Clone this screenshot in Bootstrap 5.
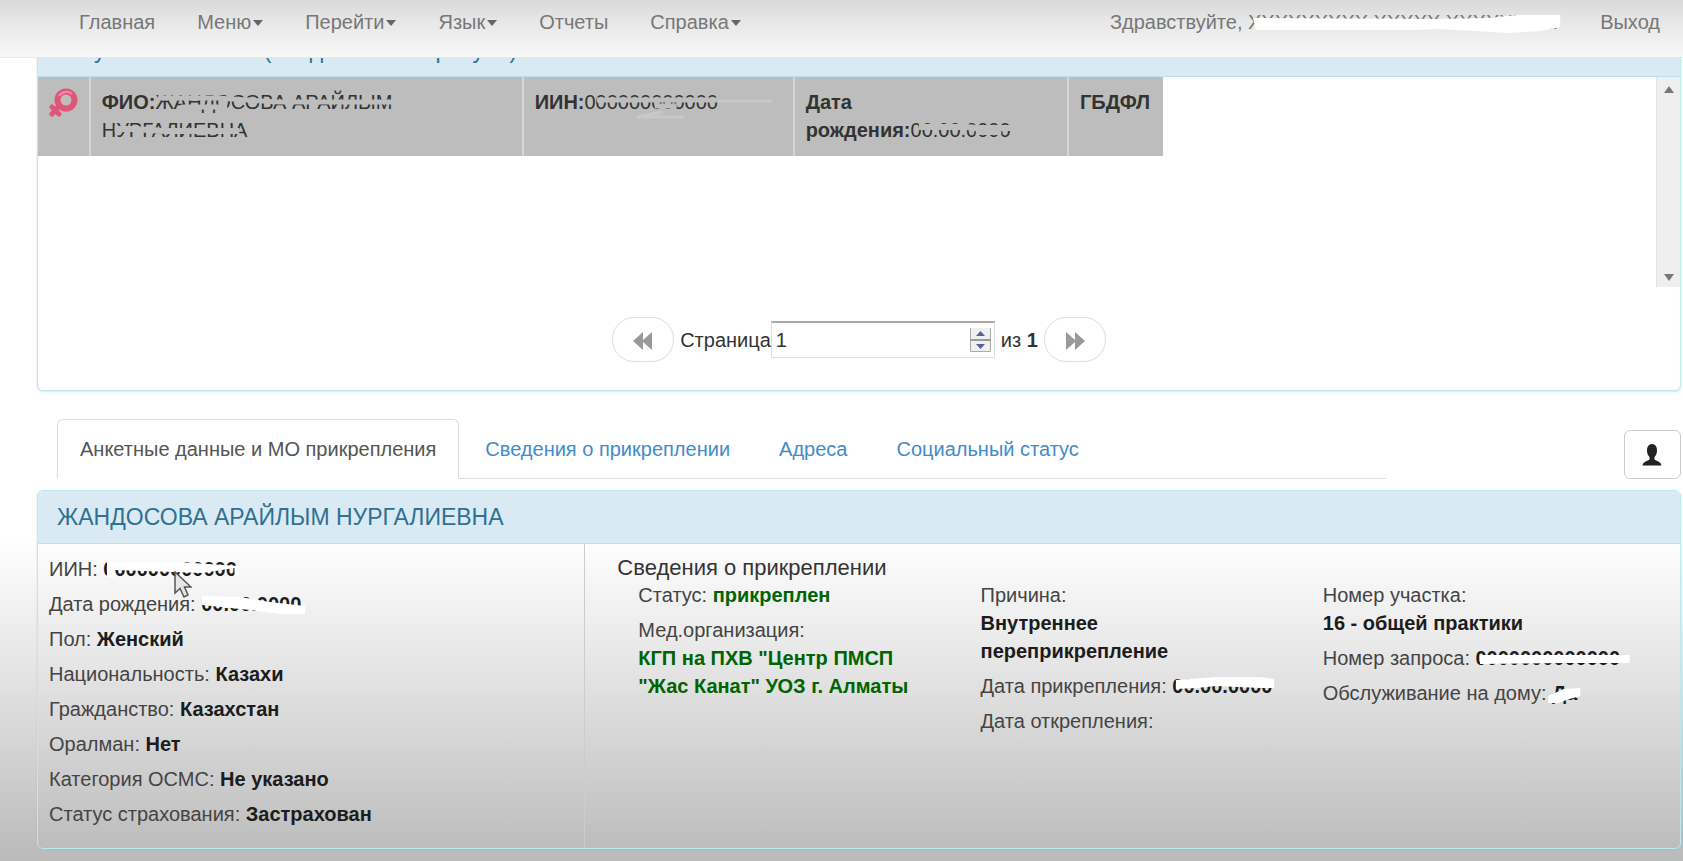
<!DOCTYPE html>
<html lang="ru">
<head>
<meta charset="utf-8">
<meta name="viewport" content="width=device-width, initial-scale=1">
<title>Регистр прикрепленного населения</title>
<link href="https://cdn.jsdelivr.net/npm/bootstrap@5.3.0/dist/css/bootstrap.min.css" rel="stylesheet">
<style>
  body { font: 20px/28px "Liberation Sans", Arial, sans-serif; color: #333; min-height: 100vh;
    background: linear-gradient(#fff 0, #fff 62%, #ebebeb 74%, #d5d5d5 86%, #bababa 100%) no-repeat; }
  .topbar { height: 58px; background: linear-gradient(#d9d9d9, #e6e6e6 35%, #f8f8f8); border-bottom: 1px solid #e7e7e7; padding: 8px 2px 0 58px; }
  .topbar .nav-link { color: #777; padding: 0 21px; white-space: nowrap; }
  .topbar .dropdown-toggle::after { margin-left: 2px; vertical-align: 3px; border-width: 6px 5px 0; border-style: solid; border-color: #666 transparent transparent; }
  .page { padding: 23px 2px 11px 37px; }
  .panel { border: 1px solid #bce8f1; border-radius: 6px; box-shadow: 0 1px 2px rgba(120,190,210,.35); }
  .panel-head { background: #d9eaf5; border-bottom: 1px solid #bce0ee; border-radius: 5px 5px 0 0; color: #31708f; padding: 13px 19px; }
  .panel-head h3 { font-size: 23px; line-height: 26px; margin: 0; font-weight: 400; }
  .results { min-height: 210px; }
  .people { width: 69.5%; table-layout: fixed; }
  .people td { background: #bdbdbd; padding: 11px; height: 79px; vertical-align: top; border-right: 2px solid #d6d6d6; }
  .people td:last-child { border-right: 0; }
  .scroll-rail { width: 24px; background: #efefef; border-left: 1px solid #e2e2e2; padding: 9px 0 6px; }
  .pager-row { padding: 30px 0 28px; gap: 6px; }
  .pager-btn { width: 62px; height: 45px; border: 1px solid #ddd; border-radius: 22px; background: #fff; padding: 0; }
  .page-input { width: 224px; height: 37px; border: 1px solid #ddd; border-top: 2px solid #aaa; padding: 0 4px; color: #333; appearance: textfield; -moz-appearance: textfield; }
  .page-input::-webkit-inner-spin-button { appearance: none; -webkit-appearance: none; }
  .spinner-art { right: 4px; top: 7px; pointer-events: none; }
  .tabs-row { margin-top: 28px; margin-bottom: 11px; }
  .tabs-col { padding-left: 20px; padding-right: 21px; }
  .nav-tabs { border-bottom: 1px solid #ddd; }
  .nav-tabs .nav-link { color: #428bca; padding: 15px 22px; margin-right: 3px; border-radius: 6px 6px 0 0; white-space: nowrap; }
  .nav-tabs .nav-link.active { color: #555; background: #fff; border-color: #ddd #ddd #fff; }
  .user-btn { width: 57px; height: 49px; border: 1px solid #ccc; border-radius: 6px; background: #fff; }
  .left-col { border-right: 1px solid #ccc; padding: 11px 11px 13px; }
  .right-col { padding: 11px 36px 11px 32px; }
  .right-col h4 { font-size: 22px; line-height: 26px; margin: 0; font-weight: 400; color: #333; }
  .facts { margin: 0; padding: 0; list-style: none; }
  .facts li { padding-bottom: 7px; color: #444; }
  .facts strong { color: #1c1c1c; display: inline-block; }
  .facts .attached { color: #006400; }
  .fact-col { padding: 0 21px; }
  .strike-art { left: 0; top: 0; width: 100%; height: 28px; overflow: visible; pointer-events: none; }
  .pointer-art { left: 125px; top: 16px; }
</style>
</head>
<body>
<nav class="topbar fixed-top d-flex justify-content-between">
  <ul class="nav flex-nowrap">
    <li><a class="nav-link" href="#">Главная</a></li>
    <li><a class="nav-link dropdown-toggle" href="#">Меню</a></li>
    <li><a class="nav-link dropdown-toggle" href="#">Перейти</a></li>
    <li><a class="nav-link dropdown-toggle" href="#">Язык</a></li>
    <li><a class="nav-link" href="#">Отчеты</a></li>
    <li><a class="nav-link dropdown-toggle" href="#">Справка</a></li>
  </ul>
  <ul class="nav flex-nowrap">
    <li><a class="nav-link" href="#">Здравствуйте, <span class="position-relative d-inline-block">ХХХХХХХХХ ХХХХХ ХХХХХХХХ!<svg class="strike-art position-absolute" viewBox="0 0 310 28" preserveAspectRatio="none" aria-hidden="true"><path fill="#fff" d="M5 10L190 11L240 10L270 7L312 7V19L292 23L260 25L225 23L190 21L170 22H8Z"/></svg></span></a></li>
    <li><a class="nav-link" href="#">Выход</a></li>
  </ul>
</nav>

<main class="page">
  <section class="panel bg-white">
    <div class="panel-head"><h3>Результаты поиска (найдено по запросу: 1)</h3></div>
    <div class="results d-flex justify-content-between">
      <div class="flex-grow-1">
        <table class="people">
          <colgroup><col style="width:4.6%"><col style="width:38.5%"><col style="width:24.1%"><col style="width:24.4%"><col style="width:8.4%"></colgroup>
          <tbody><tr>
            <td><svg class="d-block" width="29" height="30" viewBox="0 0 29 30" aria-label="Женский"><g fill="none" stroke="#e0557a" stroke-linecap="round"><circle cx="17" cy="12" r="8.5" stroke-width="6"/><path d="M10 18L3 26M3 19L10 26" stroke-width="5"/></g><path d="M10 8a8.500 8.500 0 0 1 13-2" fill="none" stroke="#f28aa4" stroke-width="2"/></svg></td>
            <td><strong>ФИО:</strong><span class="position-relative d-inline-block">ЖАНДОСОВА АРАЙЛЫМ<svg class="strike-art position-absolute" viewBox="0 0 230 28" preserveAspectRatio="none" aria-hidden="true"><path fill="none" stroke="#bdbdbd" stroke-width="5" d="M3 10H60L120 14H230M25 19H70"/></svg></span> <span class="position-relative d-inline-block">НУРГАЛИЕВНА<svg class="strike-art position-absolute" viewBox="0 0 138 28" preserveAspectRatio="none" aria-hidden="true"><path fill="none" stroke="#bdbdbd" stroke-width="6" d="M12 13H30L60 15H130"/></svg></span></td>
            <td><strong>ИИН:</strong><span class="position-relative d-inline-block">000000000000<svg class="strike-art position-absolute" viewBox="0 0 134 28" preserveAspectRatio="none" aria-hidden="true"><path fill="none" stroke="#bdbdbd" stroke-width="5" d="M12 12H134M70 18H92"/><path fill="none" stroke="#c8c8c8" stroke-width="3" d="M134 13H188M52 29L78 24M52 29H100"/></svg></span></td>
            <td><strong>Дата</strong> <span class="text-nowrap d-inline-block"><strong>рождения:</strong><span class="position-relative d-inline-block">00.00.0000<svg class="strike-art position-absolute" viewBox="0 0 102 28" preserveAspectRatio="none" aria-hidden="true"><path fill="none" stroke="#bdbdbd" stroke-width="6" d="M8 11H56L66 12H102M66 16H92"/></svg></span></span></td>
            <td><strong>ГБДФЛ</strong></td>
          </tr></tbody>
        </table>
      </div>
      <div class="scroll-rail flex-shrink-0 d-flex flex-column justify-content-between align-items-center">
        <svg width="10" height="7" aria-hidden="true"><path d="M0 7L5 0L10 7Z" fill="#777"/></svg>
        <svg width="10" height="7" aria-hidden="true"><path d="M0 0L5 7L10 0Z" fill="#777"/></svg>
      </div>
    </div>
    <div class="pager-row d-flex justify-content-center align-items-center">
      <button type="button" class="pager-btn" aria-label="Назад"><svg width="20" height="18" viewBox="0 0 20 18"><path fill="#999" d="M10 0V8L19 0V18L10 10V18L0 9Z"/></svg></button>
      <div class="d-flex align-items-center">
        <label for="pageNo">Страница</label>
        <div class="position-relative">
          <input id="pageNo" class="page-input d-block" type="number" value="1">
          <svg class="spinner-art position-absolute" width="21" height="24" aria-hidden="true"><path d="M0.500 0V23.500H20.500V0" fill="#efefef" stroke="#aaa"/><path d="M0 12H21" stroke="#999" stroke-width="2"/><path fill="#5560a0" d="M6 8L10.500 3L15 8ZM6 16L10.500 21L15 16Z"/></svg>
        </div>
      </div>
      <span>из <strong>1</strong></span>
      <button type="button" class="pager-btn" aria-label="Вперед"><svg width="20" height="18" viewBox="0 0 20 18"><path fill="#999" d="M10 0V8L1 0V18L10 10V18L20 9Z"/></svg></button>
    </div>
  </section>

  <div class="tabs-row row g-0">
    <div class="col-10 tabs-col">
      <ul class="nav nav-tabs flex-nowrap">
        <li class="nav-item"><a class="nav-link active" href="#">Анкетные данные и МО прикрепления</a></li>
        <li class="nav-item"><a class="nav-link" href="#">Сведения о прикреплении</a></li>
        <li class="nav-item"><a class="nav-link" href="#">Адреса</a></li>
        <li class="nav-item"><a class="nav-link" href="#">Социальный статус</a></li>
      </ul>
    </div>
    <div class="col-2 d-flex justify-content-end align-items-end">
      <button type="button" class="user-btn p-0 d-flex justify-content-center align-items-center" aria-label="Профиль"><svg width="20" height="22" viewBox="0 0 20 22"><path fill="#222" d="M10 0C13.500 0 15 3 15 6.500C15 9.500 14 11.500 12.500 13V15.500C14 17 19 17.500 19.500 21.500H0.500C1 17.500 6 17 7.500 15.500V13C6 11.500 5 9.500 5 6.500C5 3 6.500 0 10 0Z"/></svg></button>
    </div>
  </div>

  <section class="panel">
    <div class="panel-head"><h3>ЖАНДОСОВА АРАЙЛЫМ НУРГАЛИЕВНА</h3></div>
    <div class="row g-0">
      <div class="col-4 left-col">
        <ul class="facts">
          <li class="position-relative">ИИН: <strong class="position-relative">000000000000<svg class="strike-art position-absolute" viewBox="0 0 134 28" preserveAspectRatio="none" aria-hidden="true"><path fill="#fff" d="M4 7L75 7L136 11V21H132V13L100 18L12 15V22H4Z"/></svg></strong><svg class="pointer-art position-absolute" width="18" height="27" viewBox="0 0 18 27" aria-hidden="true"><path d="M1 1V22L6 17.500L10 26L14 24L10.500 16H17Z" fill="#e6e6e6" stroke="#555" stroke-width="1.500"/></svg></li>
          <li>Дата рождения: <strong class="position-relative">00.00.0000<svg class="strike-art position-absolute" viewBox="0 0 102 28" preserveAspectRatio="none" aria-hidden="true"><path fill="#fff" d="M1 6L40 7L70 12L106 16V24H80L50 20L1 15Z"/></svg></strong></li>
          <li>Пол: <strong>Женский</strong></li>
          <li>Национальность: <strong>Казахи</strong></li>
          <li>Гражданство: <strong>Казахстан</strong></li>
          <li>Оралман: <strong>Нет</strong></li>
          <li>Категория ОСМС: <strong>Не указано</strong></li>
          <li>Статус страхования: <strong>Застрахован</strong></li>
        </ul>
      </div>
      <div class="col-8 right-col">
        <h4>Сведения о прикреплении</h4>
        <div class="row g-0">
          <ul class="col-4 facts fact-col">
            <li>Статус: <strong class="attached">прикреплен</strong></li>
            <li>Мед.организация: <strong class="attached">КГП на ПХВ "Центр ПМСП "Жас Канат" УОЗ г. Алматы</strong></li>
          </ul>
          <ul class="col-4 facts fact-col">
            <li>Причина: <strong>Внутреннее переприкрепление</strong></li>
            <li>Дата прикрепления: <strong class="position-relative">00.00.0000<svg class="strike-art position-absolute" viewBox="0 0 102 28" preserveAspectRatio="none" aria-hidden="true"><path fill="#fff" d="M4 8L45 5H90L104 7V16H90L45 14L25 16L4 17Z"/></svg></strong></li>
            <li>Дата открепления:</li>
          </ul>
          <ul class="col-4 facts fact-col">
            <li>Номер участка: <strong>16 - общей практики</strong></li>
            <li>Номер запроса: <strong class="position-relative">0000000000000<svg class="strike-art position-absolute" viewBox="0 0 145 28" preserveAspectRatio="none" aria-hidden="true"><path fill="#fff" d="M4 11H154V19H90L4 20Z"/></svg></strong></li>
            <li>Обслуживание на дому: <strong class="position-relative">Да<svg class="strike-art position-absolute" viewBox="0 0 26 28" preserveAspectRatio="none" aria-hidden="true"><path fill="#fff" d="M-4 17L12 10L29 9V17L18 20L6 24H-4Z"/></svg></strong></li>
          </ul>
        </div>
      </div>
    </div>
  </section>
</main>
<script src="https://cdn.jsdelivr.net/npm/bootstrap@5.3.0/dist/js/bootstrap.bundle.min.js"></script>
</body>
</html>
